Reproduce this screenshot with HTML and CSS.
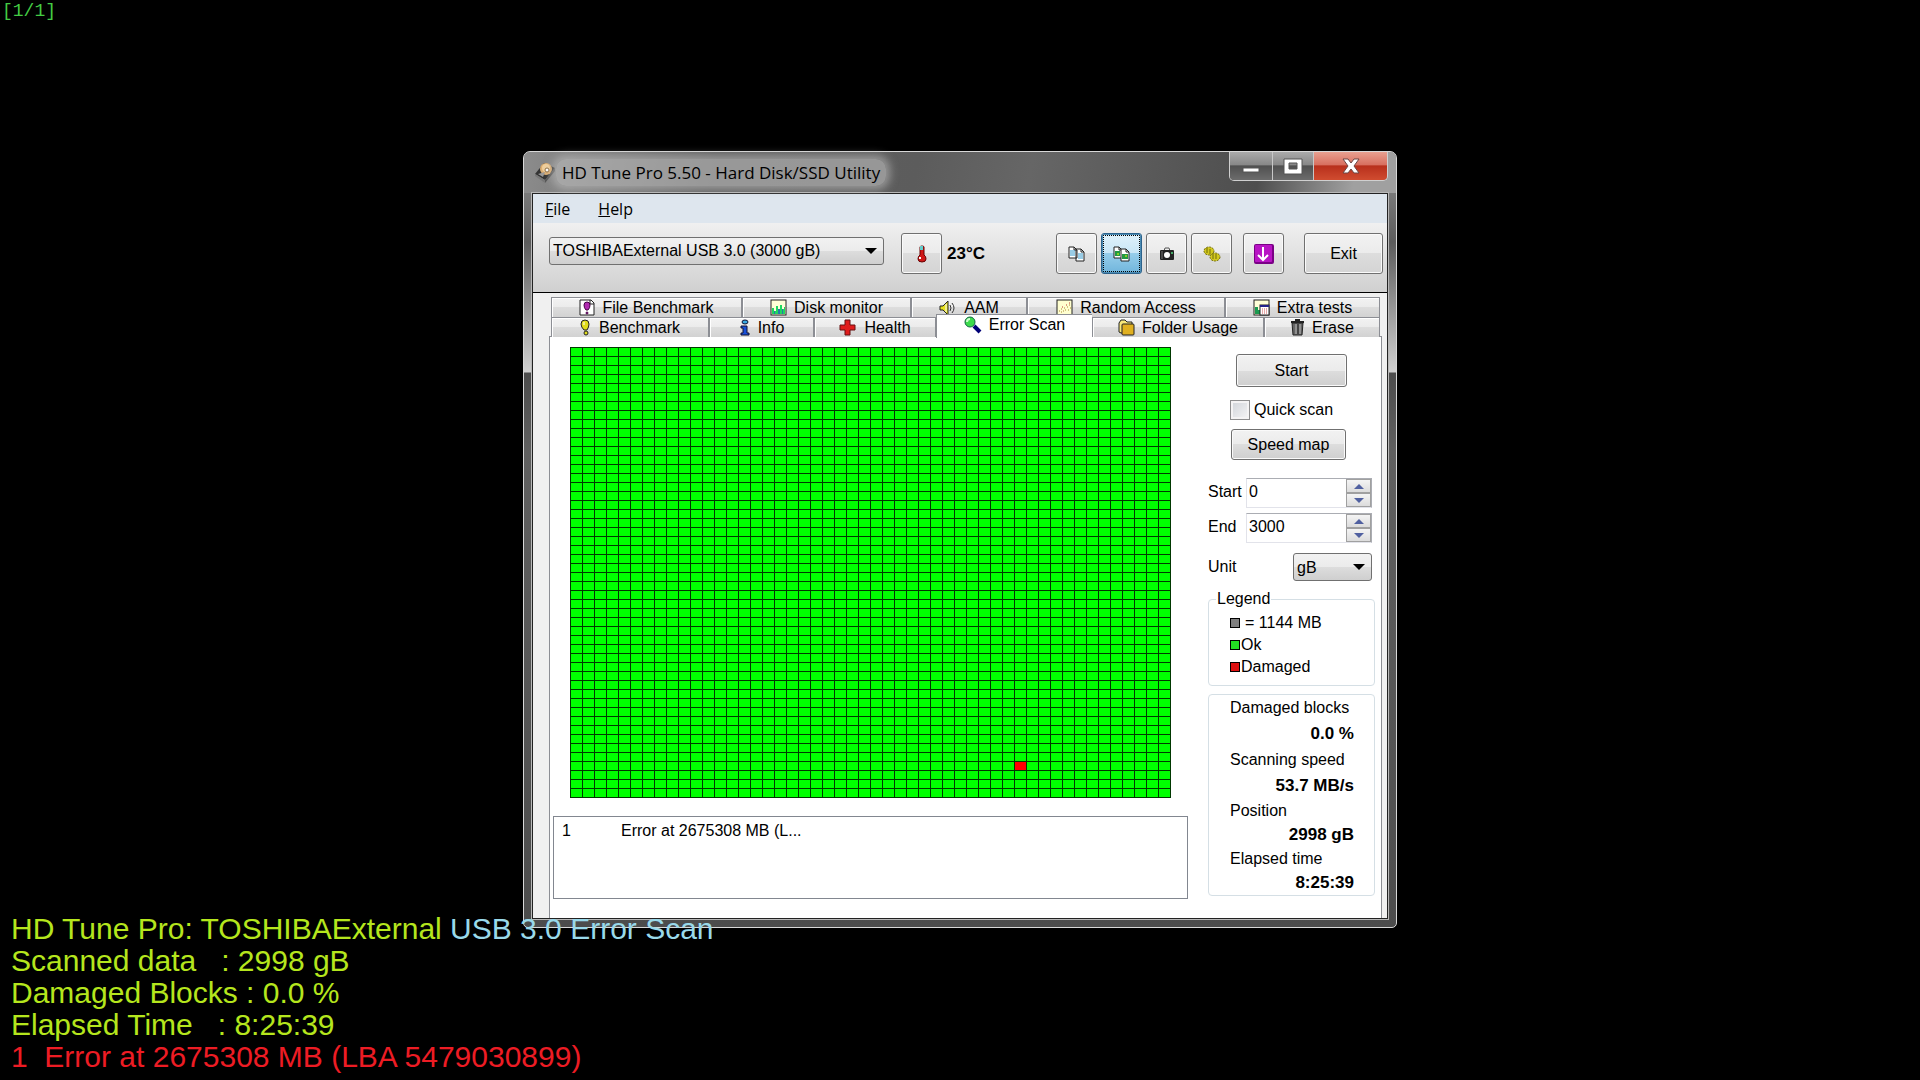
FILE: index.html
```html
<!DOCTYPE html>
<html lang="en">
<head>
    <meta charset="UTF-8">
    <meta name="viewport" content="width=device-width, initial-scale=1.0">
    <title>HD Tune Pro 5.50 - Hard Disk/SSD Utility</title>
    <link rel="stylesheet" href="styles.css">
</head>
<body>

    <div class="counter">[1/1]</div>

    <main class="window">
        <header class="titlebar">
            <svg class="app-icon" width="22" height="21" viewBox="0 0 22 21">
                <path d="M1 12 L10 1 L21 6 L11 18 Z" fill="#333"/>
                <path d="M1 12 L11 18 V21 L1 14 Z" fill="#777"/>
                <path d="M11 18 L21 6 V9 L11 21 Z" fill="#555"/>
                <ellipse cx="12" cy="7" rx="6" ry="6" fill="#dcae72"/>
                <ellipse cx="12" cy="6" rx="4" ry="4" fill="#f0cf9c"/>
                <circle cx="13" cy="8" r="2" fill="#fff" stroke="#8a6a40"/>
                <path d="M4 12 L11 10 L9 15 Z" fill="#999"/>
            </svg>
            <h1 class="title"><span>HD Tune Pro 5.50 - Hard Disk/SSD Utility</span></h1>
            <div class="caption-buttons">
                <button class="caption minimize" aria-label="Minimize">
                    <svg width="20" height="18" viewBox="0 0 20 18"><rect x="2" y="11" width="16" height="4" fill="#fff" stroke="#555"/></svg>
                </button>
                <button class="caption maximize" aria-label="Maximize">
                    <svg width="20" height="18" viewBox="0 0 20 18"><path d="M1 2 H19 V17 H1 Z M6 6 V12 H14 V6 Z" fill="#fff" fill-rule="evenodd" stroke="#555"/></svg>
                </button>
                <button class="caption close" aria-label="Close">
                    <svg width="20" height="18" viewBox="0 0 20 18"><path d="M2 2 H7 L10 6 L13 2 H18 L13 9 L18 16 H13 L10 12 L7 16 H2 L7 9 Z" fill="#fff" stroke="#6d4744"/></svg>
                </button>
            </div>
        </header>

        <div class="client">
            <nav class="menu">
                <a href="#"><u>F</u>ile</a>
                <a href="#"><u>H</u>elp</a>
            </nav>

            <div class="toolbar">
                <div class="select-box drive">
                    <select aria-label="Drive">
                        <option>TOSHIBAExternal USB 3.0 (3000 gB)</option>
                    </select>
                </div>
                <button class="tool" aria-label="Temperature">
                    <svg width="12" height="18" viewBox="0 0 12 18">
                        <path d="M4 2 Q4 1 6 1 Q8 1 8 2 V10 Q10 11 10 14 Q10 17 6 17 Q2 17 2 14 Q2 11 4 10 Z" fill="#d01818" stroke="#600"/>
                        <rect x="4" y="1" width="3" height="4" fill="#6cc"/>
                        <path d="M4 12 V14" stroke="#fff" stroke-width="2"/>
                    </svg>
                </button>
                <strong class="temperature">23°C</strong>
                <div class="tool-group">
                    <button class="tool" aria-label="Copy text">
                        <svg width="18" height="16" viewBox="0 0 18 16">
                            <path d="M1 1 H6 L9 4 V12 H1 Z M8 3 H13 L16 6 V15 H8 Z" fill="#fff" stroke="#222"/>
                            <path d="M6 1 V4 H9 M13 3 V6 H16" fill="none" stroke="#222"/>
                            <path d="M2 5 H7 M2 7 H7 M2 9 H7 M10 8 H15 M10 10 H15 M10 12 H15" stroke="#39c"/>
                        </svg>
                    </button>
                    <button class="tool selected" aria-label="Copy image">
                        <svg width="18" height="16" viewBox="0 0 18 16">
                            <path d="M1 1 H6 L9 4 V12 H1 Z" fill="#fff" stroke="#222"/>
                            <path d="M2 5 H7 V10 H2 Z" fill="#294"/>
                            <path d="M8 3 H13 L16 6 V15 H8 Z" fill="#fff" stroke="#222"/>
                            <path d="M6 1 V4 H8 M13 3 V6 H16" fill="none" stroke="#222"/>
                            <path d="M9 8 H15 V13 H9 Z" fill="#294"/>
                            <path d="M4 7 H6 V9 H4 Z M12 9 H14 V11 H12 Z" fill="#8c2"/>
                        </svg>
                    </button>
                    <button class="tool" aria-label="Screenshot">
                        <svg width="16" height="14" viewBox="0 0 16 14">
                            <path d="M5 4 L6 1 H10 L11 4" fill="none" stroke="#555"/>
                            <rect x="1" y="3" width="14" height="10" rx="1" fill="#222"/>
                            <path d="M3 4 V12" stroke="#777"/>
                            <circle cx="8" cy="8" r="3" fill="#fff"/>
                            <rect x="12" y="5" width="2" height="2" fill="#4a6"/>
                        </svg>
                    </button>
                    <button class="tool" aria-label="Options">
                        <svg width="18" height="16" viewBox="0 0 18 16">
                            <g fill="#d2c81e" stroke="#6f6a08" stroke-dasharray="2 1">
                                <ellipse cx="6" cy="5" rx="5" ry="4"/>
                                <ellipse cx="12" cy="11" rx="5" ry="4"/>
                            </g>
                            <path d="M4 2 V7 M7 3 V8 M10 8 V13 M13 8 V13" stroke="#6f6a08"/>
                        </svg>
                    </button>
                    <button class="tool spaced" aria-label="Save">
                        <svg width="20" height="20" viewBox="0 0 20 20">
                            <rect width="20" height="20" rx="2" fill="#7a0086"/>
                            <rect x="1" y="1" width="17" height="17" rx="1" fill="#b814c4"/>
                            <path d="M9 3 V16 M4 11 L9 16 L14 11" fill="none" stroke="#fff" stroke-width="2"/>
                        </svg>
                    </button>
                </div>
                <button class="tool exit">Exit</button>
            </div>

            <div class="tabs">
                <div class="tab-row back">
                    <button class="tab">
                        <svg width="16" height="18" viewBox="0 0 16 18">
                            <path d="M1 1 H12 L15 4 V16 H1 Z" fill="#fff" stroke="#222"/>
                            <path d="M11 1 V5 H15" fill="none" stroke="#222"/>
                            <path d="M8 3 Q11 3 11 6 Q11 9 9 11 H7 Q5 9 5 6 Q5 3 8 3 Z" fill="#b02ab0" stroke="#404"/>
                            <circle cx="8" cy="14" r="1" fill="#b02ab0" stroke="#404"/>
                        </svg>
                        File Benchmark
                    </button>
                    <button class="tab">
                        <svg width="17" height="17" viewBox="0 0 17 17">
                            <rect x="1" y="1" width="15" height="15" fill="#ffffd8" stroke="#222"/>
                            <path d="M2 15 V9 H4 V12 H6 V7 H8 V10 H10 V6 H12 V10 H14 V8 H15 V15 Z" fill="#1ed760"/>
                            <path d="M4 12 H5 V15 H4 Z M8 10 H10 V15 H8 Z M12 10 H13 V15 H12 Z" fill="#2878a8"/>
                        </svg>
                        Disk monitor
                    </button>
                    <button class="tab">
                        <svg width="18" height="16" viewBox="0 0 18 16">
                            <path d="M1 6 H4 L9 1 V15 L4 10 H1 Z" fill="#e6e020" stroke="#222"/>
                            <path d="M7 4 V12" stroke="#fff"/>
                            <path d="M11 5 Q13 8 11 11 M13 3 Q17 8 13 13" fill="none" stroke="#333"/>
                        </svg>
                        AAM
                    </button>
                    <button class="tab">
                        <svg width="17" height="17" viewBox="0 0 17 17">
                            <rect x="1" y="1" width="15" height="15" fill="#ffffd0" stroke="#222"/>
                            <path d="M3 12 h1 M5 10 h1 M5 13 h1 M7 12 h1 M8 9 h1 M9 11 h1 M11 8 h1 M12 11 h1 M13 6 h1 M14 9 h1" stroke="#a83"/>
                            <path d="M10 6 h1 M13 4 h1 M6 8 h1" stroke="#b33"/>
                        </svg>
                        Random Access
                    </button>
                    <button class="tab">
                        <svg width="17" height="17" viewBox="0 0 17 17">
                            <rect x="1" y="1" width="15" height="15" fill="#ffffd8" stroke="#222"/>
                            <path d="M2 15 V8 H5 V11 H7 V15 Z" fill="#1a9a50"/>
                            <rect x="7" y="6" width="9" height="10" fill="#fff" stroke="#222"/>
                            <path d="M7 7 H16" stroke="#228" stroke-width="2"/>
                            <path d="M9 10 H15 M9 12 H15 M9 14 H15" stroke="#c55" stroke-dasharray="1 1"/>
                        </svg>
                        Extra tests
                    </button>
                </div>
                <div class="tab-row front">
                    <button class="tab">
                        <svg width="12" height="17" viewBox="0 0 12 17">
                            <path d="M5 1 Q9 1 9 5 Q9 8 7 11 H4 Q1 8 1 5 Q1 1 5 1 Z" fill="#e0dc1c" stroke="#222"/>
                            <path d="M4 3 V6" stroke="#fff"/>
                            <ellipse cx="6" cy="14" rx="2" ry="2" fill="#e0dc1c" stroke="#222"/>
                        </svg>
                        Benchmark
                    </button>
                    <button class="tab">
                        <svg width="12" height="17" viewBox="0 0 12 17">
                            <ellipse cx="6" cy="3" rx="3" ry="2" fill="#38a8e0" stroke="#113"/>
                            <path d="M2 7 H8 V14 H10 V16 H2 V14 H4 V9 H2 Z" fill="#1850d8" stroke="#113"/>
                        </svg>
                        Info
                    </button>
                    <button class="tab">
                        <svg width="18" height="17" viewBox="0 0 18 17">
                            <path d="M6 1 H11 V6 H16 V11 H11 V16 H6 V11 H1 V6 H6 Z" fill="#e01c1c" stroke="#611"/>
                        </svg>
                        Health
                    </button>
                    <button class="tab active">
                        <svg width="18" height="18" viewBox="0 0 18 18">
                            <path d="M10 10 L16 16" stroke="#007" stroke-width="4"/>
                            <circle cx="6" cy="6" r="5" fill="#3ddc4c" stroke="#164"/>
                            <path d="M3 6 Q3 3 6 3" fill="none" stroke="#cfc" stroke-width="2"/>
                        </svg>
                        Error Scan
                    </button>
                    <button class="tab">
                        <svg width="17" height="17" viewBox="0 0 17 17">
                            <path d="M1 4 L3 1 H7 L9 3 H14 V14 H3 L1 13 Z" fill="#f8e878" stroke="#222"/>
                            <rect x="4" y="5" width="12" height="11" rx="1" fill="#e0b020" stroke="#222"/>
                        </svg>
                        Folder Usage
                    </button>
                    <button class="tab">
                        <svg width="15" height="17" viewBox="0 0 15 17">
                            <path d="M1 3 H14 M5 1 H10" stroke="#222" stroke-width="2"/>
                            <path d="M2 4 H13 L12 16 H3 Z" fill="#666" stroke="#222"/>
                            <path d="M6 5 V15 M10 5 V15" stroke="#bbb"/>
                            <path d="M8 5 V15" stroke="#222"/>
                        </svg>
                        Erase
                    </button>
                </div>
            </div>

            <section class="panel">
                <div class="scan">
                    <div class="block-map" role="img" aria-label="Scanned blocks">
                        <span class="damaged-block"></span>
                    </div>
                    <table class="errors">
                        <tr>
                            <td>1</td>
                            <td>Error at 2675308 MB (L...</td>
                        </tr>
                    </table>
                </div>

                <aside class="side">
                    <button class="push start">Start</button>
                    <div class="check">
                        <input type="checkbox" id="quick">
                        <label for="quick">Quick scan</label>
                    </div>
                    <button class="push speed">Speed map</button>

                    <div class="field first">
                        <label for="start">Start</label>
                        <div class="spinner">
                            <input type="text" id="start" value="0">
                            <div class="arrows">
                                <button class="up" aria-label="Increase start"></button>
                                <button class="down" aria-label="Decrease start"></button>
                            </div>
                        </div>
                    </div>
                    <div class="field">
                        <label for="end">End</label>
                        <div class="spinner">
                            <input type="text" id="end" value="3000">
                            <div class="arrows">
                                <button class="up" aria-label="Increase end"></button>
                                <button class="down" aria-label="Decrease end"></button>
                            </div>
                        </div>
                    </div>
                    <div class="field unit">
                        <label for="unit">Unit</label>
                        <div class="select-box">
                            <select id="unit">
                                <option>gB</option>
                            </select>
                        </div>
                    </div>

                    <fieldset class="legend-box">
                        <legend>Legend</legend>
                        <p class="key size">= 1144 MB</p>
                        <p class="key ok">Ok</p>
                        <p class="key damaged">Damaged</p>
                    </fieldset>

                    <dl class="stats">
                        <dt>Damaged blocks</dt>
                        <dd>0.0 %</dd>
                        <dt>Scanning speed</dt>
                        <dd>53.7 MB/s</dd>
                        <dt class="tight">Position</dt>
                        <dd class="tight">2998 gB</dd>
                        <dt class="tight">Elapsed time</dt>
                        <dd class="tight">8:25:39</dd>
                    </dl>
                </aside>
            </section>
        </div>
    </main>

    <div class="osd">
        <p>HD Tune Pro: TOSHIBAExternal <span class="over">USB 3.0 Error Scan</span></p>
        <p>Scanned data   : 2998 gB</p>
        <p>Damaged Blocks : 0.0 %</p>
        <p>Elapsed Time   : 8:25:39</p>
        <p class="error">1  Error at 2675308 MB (LBA 5479030899)</p>
    </div>

</body>
</html>
```
FILE: styles.css
```css
/* General Styling */
* {
    box-sizing: border-box;
}

body {
    margin: 0;
    min-height: 100vh;
    padding: 151px 0;
    background: black;
    color: black;
    font-family: "Liberation Sans", Arial, sans-serif;
    font-size: 16px;
    line-height: 20px;
}

p, dl, dd, h1 {
    margin: 0;
}

button, select, input {
    margin: 0;
    padding: 0;
    font: inherit;
    color: inherit;
}

svg {
    display: block;
    flex: none;
}

/* Window frame */
.window {
    width: fit-content;
    min-width: 874px;
    margin: 0 auto;
    padding: 0 8px 8px;
    border: 1px solid #d8d8d8;
    border-radius: 7px 7px 5px 5px;
    background: linear-gradient(#929292 0, #5c5c5c 90px, #808080 130px, #d0d0d0 220px, #4c4c4c 221px, #606060 300px, #4c4c4c 100%);
}

.titlebar {
    display: flex;
    align-items: center;
    height: 41px;
    margin: 0 -8px;
    padding: 0 8px 0 10px;
    border-radius: 6px 6px 0 0;
    background: linear-gradient(100deg, #8c8c8c 0, #606060 22%, #5c5c5c 45%, #666 58%, #4e4e4e 84%, #a0a0a0 95%);
}

.title {
    flex: 1;
    font-family: "Open Sans", sans-serif;
    font-size: 17px;
    font-weight: normal;
}

/* Soft light patch behind the title */
.title span {
    padding: 2px 6px;
    border-radius: 10px;
    background: rgba(190, 190, 190, 0.6);
    box-shadow: 0 0 8px 4px rgba(190, 190, 190, 0.6);
}

.caption-buttons {
    display: flex;
    align-self: flex-start;
    border: 1px solid #d0d0d0;
    border-top: none;
    border-radius: 0 0 5px 5px;
    overflow: hidden;
}

.caption {
    display: flex;
    align-items: center;
    justify-content: center;
    width: 43px;
    height: 28px;
    border: none;
    border-right: 1px solid #c8c8c8;
    background: linear-gradient(#aaa, #888 45%, #505050 50%, #6c6c6c);
}

.maximize {
    width: 41px;
}

.close {
    width: 73px;
    border-right: none;
    background: linear-gradient(#e8a090, #d87060 45%, #b8301c 50%, #d04c30);
}

.client {
    border: 1px solid #222;
    box-shadow: 0 0 0 1px #b8b8b8;
    background: #f0f0f0;
}

/* Menu */
.menu {
    display: flex;
    gap: 28px;
    padding: 2px 12px 0;
    background: #dee6ee;
    font-family: "Open Sans", sans-serif;
    line-height: 27px;
}

.menu a {
    color: black;
    text-decoration: none;
}

/* Toolbar */
.toolbar {
    display: flex;
    align-items: flex-start;
    padding: 10px 4px 17px 16px;
    border-bottom: 1px solid black;
    background: linear-gradient(#f0f0f0, #d0d0d0);
}

.select-box {
    position: relative;
}

.select-box select {
    appearance: none;
    width: 100%;
    height: 28px;
    padding: 0 3px;
    border: 1px solid #707070;
    border-radius: 3px;
    background: linear-gradient(#f2f2f2, #ebebeb 50%, #ddd 50%, #cfcfcf);
}

.select-box::after {
    content: "";
    position: absolute;
    top: 11px;
    right: 7px;
    border: 6px solid transparent;
    border-top-color: black;
    border-bottom: none;
    pointer-events: none;
}

.drive {
    width: 335px;
    margin: 4px 17px 0 0;
}

.tool {
    display: flex;
    align-items: center;
    justify-content: center;
    width: 41px;
    height: 41px;
    border: 1px solid #707070;
    border-radius: 3px;
    box-shadow: inset 0 0 0 1px #fafafa;
    background: linear-gradient(#f2f2f2, #ebebeb 50%, #ddd 50%, #d4d4d4);
}

.tool.selected {
    border-color: #2c628b;
    background: linear-gradient(#e0f2fb, #c8e6f6 50%, #96cdea 50%, #70b5dc);
    box-shadow: inset 0 0 0 1px #4c8cb4;
    outline: 1px dotted black;
    outline-offset: -3px;
}

.temperature {
    flex: 1;
    margin-left: 5px;
    font-size: 17px;
    line-height: 42px;
}

.tool-group {
    display: flex;
    gap: 4px;
}

.tool.spaced {
    margin-left: 7px;
}

.exit {
    width: 79px;
    margin-left: 20px;
}

/* Tabs */
.tabs {
    padding: 4px 7px 0 18px;
}

.tab-row {
    display: grid;
    height: 20px;
}

.back {
    grid-template-columns: 191fr 169fr 116fr 198fr 155fr;
}

.front {
    grid-template-columns: 158fr 105fr 122fr 156fr 172fr 116fr;
}

.tab {
    display: flex;
    align-items: center;
    justify-content: center;
    gap: 7px;
    height: 20px;
    border: 1px solid #8c8e94;
    border-bottom: none;
    box-shadow: inset 1px 1px #fff;
    background: linear-gradient(#f2f2f2, #ebebeb 50%, #ddd 50%, #d2d2d2);
    line-height: 18px;
    white-space: nowrap;
}

.tab.active {
    z-index: 1;
    height: 24px;
    margin-top: -3px;
    padding-bottom: 4px;
    border-right: none;
    background: white;
}

/* Panel */
.panel {
    display: flex;
    gap: 20px;
    margin: -1px 5px 0 16px;
    padding: 10px 6px 19px 3px;
    border: 1px solid #8c8e94;
    border-bottom: none;
    background: white;
}

.scan {
    flex: 1;
}

/* 50 x 50 blocks, 12 x 9 each, with one closing line right and below */
.block-map {
    display: grid;
    grid-template: repeat(50, 9px) / repeat(50, 12px);
    width: 601px;
    height: 451px;
    margin: 0 0 18px 17px;
    background:
        repeating-linear-gradient(to right, #003800 0 1px, transparent 1px 12px),
        repeating-linear-gradient(#003800 0 1px, transparent 1px 9px),
        #00ff00;
}

.damaged-block {
    grid-area: 47 / 38;
    margin: 1px 0 0 1px;
    background: red;
}

.errors {
    display: block;
    height: 83px;
    padding: 4px 8px;
    border: 1px solid #828790;
    border-spacing: 0;
}

.errors td {
    padding: 0;
}

.errors td:first-child {
    width: 59px;
}

/* Side controls */
.side {
    width: 167px;
    padding-top: 7px;
}

.push {
    display: block;
    border: 1px solid #707070;
    border-radius: 3px;
    box-shadow: inset 0 0 0 1px #fafafa;
    background: linear-gradient(#f2f2f2, #ebebeb 50%, #ddd 50%, #cfcfcf);
}

.start {
    width: 111px;
    height: 33px;
    margin-left: 28px;
}

.check {
    display: flex;
    gap: 4px;
    margin: 13px 0 9px 22px;
}

.check input {
    appearance: none;
    width: 20px;
    height: 20px;
    border: 1px solid #8e8f8f;
    background: linear-gradient(135deg, #cfd4d9, #f6f6f6);
    box-shadow: inset 0 0 0 2px #f4f4f4;
}

.speed {
    width: 115px;
    height: 31px;
    margin-left: 23px;
}

.field {
    display: flex;
    justify-content: space-between;
    margin: 0 3px 5px 0;
    line-height: 28px;
}

.field.first {
    margin-top: 18px;
}

.field.unit {
    margin: 10px 3px 8px 0;
}

.unit .select-box {
    width: 79px;
}

.spinner {
    display: flex;
    width: 126px;
    height: 30px;
    border: 1px solid #abadb3;
    border-left-color: #e2e3ea;
    border-bottom-color: #e2e3ea;
}

.spinner input {
    flex: 1;
    min-width: 0;
    padding: 0 2px 2px;
    border: none;
    background: none;
}

.arrows {
    display: flex;
    flex-direction: column;
    width: 25px;
}

.arrows button {
    display: flex;
    flex: 1;
    align-items: center;
    justify-content: center;
    border: 1px solid #a0a0a0;
    background: linear-gradient(#f4f4f4, #dcdcdc);
}

.arrows button::before {
    content: "";
    border: 5px solid transparent;
}

.arrows .up::before {
    border-top: none;
    border-bottom-color: #5060a0;
}

.arrows .down::before {
    border-bottom: none;
    border-top-color: #5060a0;
}

.legend-box {
    margin: 0;
    padding: 4px 0 7px 21px;
    border: 1px solid #d5dfe5;
    border-radius: 4px;
}

.legend-box legend {
    margin-left: -14px;
    padding: 0 1px;
    line-height: 18px;
}

.key {
    display: flex;
    align-items: center;
    gap: 1px;
    line-height: 22px;
}

.key::before {
    content: "";
    width: 8px;
    height: 8px;
    border: 1px solid black;
}

.key.size {
    gap: 5px;
}

.size::before {
    background: #808080;
}

.ok::before {
    background: #22dd22;
}

.damaged::before {
    background: #dd1111;
}

.stats {
    margin-top: 8px;
    padding: 0 20px 0 21px;
    border: 1px solid #d5dfe5;
    border-radius: 4px;
    line-height: 26px;
}

.stats dd {
    font-size: 17px;
    font-weight: bold;
    text-align: right;
}

.stats .tight {
    line-height: 24px;
}

/* Text drawn over the desktop */
.counter {
    position: absolute;
    top: 1px;
    left: 2px;
    color: #44cc44;
    font-family: "Liberation Mono", monospace;
    font-size: 18px;
}

.osd {
    position: absolute;
    bottom: 7px;
    left: 11px;
    color: #b5e61d;
    font-size: 30px;
    line-height: 32px;
}

.osd p {
    white-space: pre;
}

.over {
    color: #99d9ea;
}

.error {
    color: #ed1c24;
}
```
